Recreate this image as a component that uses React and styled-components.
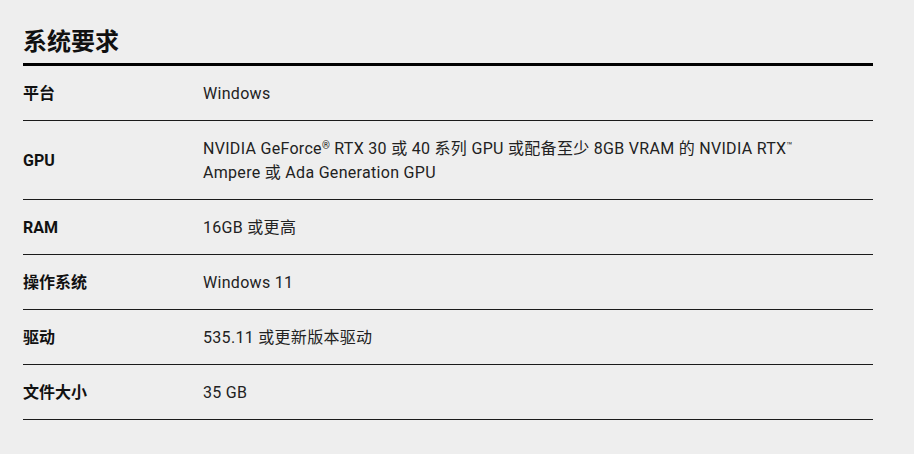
import React from 'react';
import styled, { createGlobalStyle } from 'styled-components';

const GlobalStyle = createGlobalStyle`
  html, body {
    margin: 0;
    padding: 0;
    background: #eeeeee;
  }
  body {
    font-family: Roboto, "Noto Sans CJK SC", sans-serif;
    color: #1a1a1a;
  }
`;

const Page = styled.div`
  width: 914px;
  height: 454px;
  box-sizing: border-box;
  padding: 24px 41px 0 23px;
  background: #eeeeee;
`;

const Title = styled.h2`
  margin: 0 0 7px;
  font-family: "Noto Sans CJK SC", sans-serif;
  font-size: 24px;
  line-height: 32px;
  font-weight: 700;
  color: #111111;
`;

const Table = styled.div`
  border-top: 3px solid #000000;
`;

const Row = styled.div`
  display: grid;
  grid-template-columns: 180px 1fr;
  align-items: center;
  padding: 16px 0 14px;
  border-bottom: 1px solid #1a1a1a;
`;

const Label = styled.div`
  font-family: Roboto, "Noto Sans CJK SC", sans-serif;
  font-size: 16px;
  line-height: 24px;
  font-weight: 700;
  color: #111111;
`;

const Value = styled.div`
  font-family: Roboto, "Noto Sans CJK SC", sans-serif;
  font-size: 16px;
  line-height: 24px;
  font-weight: 400;
  letter-spacing: 0.3px;
  color: #222222;

  sup {
    font-size: 10px;
    line-height: 0;
    vertical-align: 5px;
  }
`;

const specs = [
  { label: '平台', value: 'Windows' },
  {
    label: 'GPU',
    value: (
      <>
        NVIDIA GeForce<sup>®</sup> RTX 30 或 40 系列 GPU 或配备至少 8GB VRAM 的 NVIDIA RTX<sup>™</sup>
        <br />
        Ampere 或 Ada Generation GPU
      </>
    ),
  },
  { label: 'RAM', value: '16GB 或更高' },
  { label: '操作系统', value: 'Windows 11' },
  { label: '驱动', value: '535.11 或更新版本驱动' },
  { label: '文件大小', value: '35 GB' },
];

export default function App() {
  return (
    <>
      <GlobalStyle />
      <Page>
        <Title>系统要求</Title>
        <Table>
          {specs.map((s) => (
            <Row key={s.label}>
              <Label>{s.label}</Label>
              <Value>{s.value}</Value>
            </Row>
          ))}
        </Table>
      </Page>
    </>
  );
}
